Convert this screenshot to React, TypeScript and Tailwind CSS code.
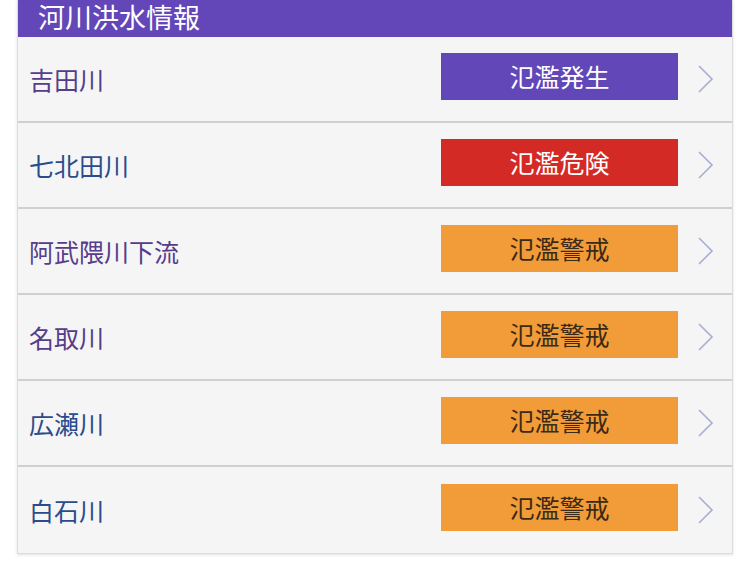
const rivers = [
  { name: "吉田川", status: "氾濫発生", tone: "purple", link: "text-[#553d8c]" },
  { name: "七北田川", status: "氾濫危険", tone: "red", link: "text-[#2b4c8c]" },
  { name: "阿武隈川下流", status: "氾濫警戒", tone: "orange", link: "text-[#553d8c]" },
  { name: "名取川", status: "氾濫警戒", tone: "orange", link: "text-[#553d8c]" },
  { name: "広瀬川", status: "氾濫警戒", tone: "orange", link: "text-[#2b4c8c]" },
  { name: "白石川", status: "氾濫警戒", tone: "orange", link: "text-[#2b4c8c]" },
];

const badgeTone: Record<string, string> = {
  purple: "bg-[#6247b9] text-white",
  red: "bg-[#d42a26] text-white",
  orange: "bg-[#f19c38] text-[#3b2a16]",
};

function Chevron() {
  return (
    <svg width="18" height="30" viewBox="0 0 18 30" fill="none">
      <path d="M2 2 L15 15 L2 28" stroke="#a7aed4" strokeWidth="1.6" />
    </svg>
  );
}

export default function App() {
  return (
    <main
      className="min-h-screen bg-white pl-[17px]"
      style={{ fontFamily: '"Noto Sans CJK JP", "Noto Sans", sans-serif' }}
    >
      <div className="w-[716px] border-x border-b border-[#dcdcdc] shadow-[0_1px_3px_rgba(0,0,0,0.12)]">
        <div className="flex h-[37px] items-center overflow-hidden bg-[#6347b9] pb-[4px] pl-[20px] text-[27px] leading-[30px] text-white">
          河川洪水情報
        </div>
        {rivers.map((r) => (
          <div
            key={r.name}
            className="flex h-[86px] items-center border-b-2 border-[#d0d0d0] bg-[#f5f5f5] last:border-b-0"
          >
            <span className={`pl-[11px] text-[25px] leading-none ${r.link}`}>{r.name}</span>
            <div
              className={`ml-auto mb-[6px] flex h-[47px] w-[237px] items-center justify-center text-[25px] leading-none ${badgeTone[r.tone]}`}
            >
              {r.status}
            </div>
            <div className="flex w-[54px] justify-center pl-[2px]">
              <Chevron />
            </div>
          </div>
        ))}
      </div>
    </main>
  );
}
